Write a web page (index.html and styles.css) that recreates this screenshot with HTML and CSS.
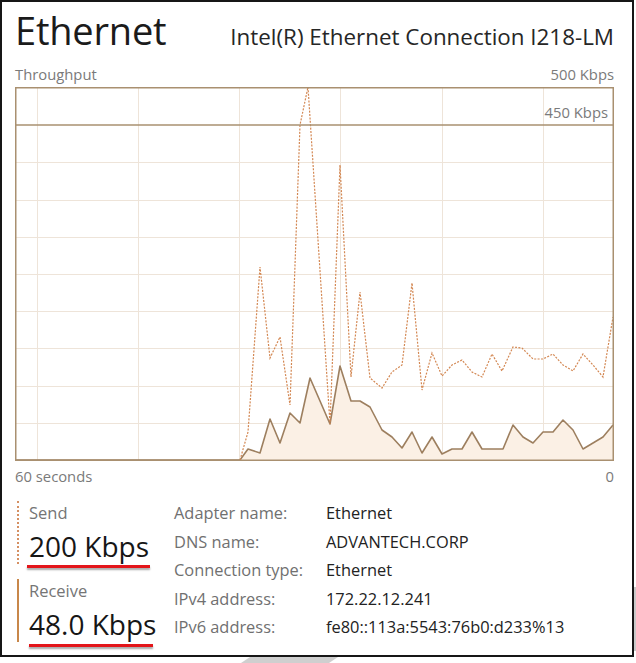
FILE: index.html
```html
<!DOCTYPE html>
<html lang="en">
<head>
<meta charset="utf-8">
<title>Ethernet</title>
<link rel="stylesheet" href="styles.css">
</head>
<body>
<div class="frame">
  <header class="header">
    <h1 class="title">Ethernet</h1>
    <div class="adapter">Intel(R) Ethernet Connection I218-LM</div>
  </header>
  <div class="axis axis-top"><span>Throughput</span><span>500 Kbps</span></div>
  <div class="graph">
    <svg class="chart" width="599" height="374" viewBox="0 0 599 374">
      <g class="grid">
        <line x1="0" y1="75.5" x2="599" y2="75.5"/>
        <line x1="0" y1="113.5" x2="599" y2="113.5"/>
        <line x1="0" y1="150.5" x2="599" y2="150.5"/>
        <line x1="0" y1="187.5" x2="599" y2="187.5"/>
        <line x1="0" y1="224.5" x2="599" y2="224.5"/>
        <line x1="0" y1="261.5" x2="599" y2="261.5"/>
        <line x1="0" y1="299.5" x2="599" y2="299.5"/>
        <line x1="0" y1="336.5" x2="599" y2="336.5"/>
        <line x1="22.5" y1="0" x2="22.5" y2="374"/>
        <line x1="123.5" y1="0" x2="123.5" y2="374"/>
        <line x1="224.5" y1="0" x2="224.5" y2="374"/>
        <line x1="325.5" y1="0" x2="325.5" y2="374"/>
        <line x1="427.5" y1="0" x2="427.5" y2="374"/>
        <line x1="528.5" y1="0" x2="528.5" y2="374"/>
      </g>
      <polygon class="recv-fill" points="225,373 233,362 245,366 255,332 265,356 275,326 285,336 295,291 315,337 325,279 336,314 345,314 355,320 367,343 377,350 387,361 397,345 407,366 417,350 427,367 437,362 447,362 457,345 467,362 488,362 498,338 508,350 518,356 528,345 538,345 548,333 558,343 568,362 578,356 588,350 598,338 598,373"/>
      <polyline class="recv-line" points="0,373 225,373 233,362 245,366 255,332 265,356 275,326 285,336 295,291 315,337 325,279 336,314 345,314 355,320 367,343 377,350 387,361 397,345 407,366 417,350 427,367 437,362 447,362 457,345 467,362 488,362 498,338 508,350 518,356 528,345 538,345 548,333 558,343 568,362 578,356 588,350 598,338"/>
      <polyline class="send-line" points="225,373 233,345 245,180 255,271 265,250 275,318 285,38 293,0 315,337 325,78 336,290 345,205 355,291 367,301 377,285 387,278 397,196 407,303 417,266 427,289 437,278 447,273 457,285 467,290 477,267 487,284 498,260 507,261 518,272 528,272 538,267 548,278 558,284 568,267 578,278 588,290 598,230"/>
      <line class="limit" x1="0" y1="38" x2="599" y2="38"/>
      <rect class="border" x="0.75" y="0.75" width="597.5" height="372.5"/>
    </svg>
    <span class="graph-label">450 Kbps</span>
  </div>
  <div class="axis axis-bottom"><span>60 seconds</span><span>0</span></div>
  <section class="stats">
    <div class="metrics">
      <div class="metric metric-send">
        <div class="metric-body">
          <div class="metric-label">Send</div>
          <div class="metric-value">200 Kbps</div>
        </div>
        <div class="underline"></div>
      </div>
      <div class="metric metric-recv">
        <div class="metric-body">
          <div class="metric-label">Receive</div>
          <div class="metric-value">48.0 Kbps</div>
        </div>
        <div class="underline"></div>
      </div>
    </div>
    <dl class="details">
      <dt>Adapter name:</dt><dd>Ethernet</dd>
      <dt>DNS name:</dt><dd>ADVANTECH.CORP</dd>
      <dt>Connection type:</dt><dd>Ethernet</dd>
      <dt>IPv4 address:</dt><dd>172.22.12.241</dd>
      <dt>IPv6 address:</dt><dd>fe80::113a:5543:76b0:d233%13</dd>
    </dl>
  </section>
</div>
</body>
</html>
```
FILE: styles.css
```css
* { box-sizing: border-box; }
html, body { margin: 0; padding: 0; background: #fff; }
body {
  font-family: "Open Sans", "Noto Sans", sans-serif;
  color: #1a1a1a;
  width: 636px;
  height: 663px;
  overflow: hidden;
}
.frame {
  position: relative;
  width: 634px;
  height: 657px;
  border: 2px solid #161616;
  padding: 5px 18px 0 13px;
}
.frame::after {
  content: "";
  position: absolute;
  left: 236px;
  top: 655px;
  width: 100px;
  height: 8px;
  background: #cfcfcf;
  clip-path: polygon(12% 0, 100% 0, 88% 100%, 0 100%);
}
.frame::before {
  content: "";
  position: absolute;
  right: -4px;
  top: 585px;
  width: 2px;
  height: 64px;
  background: #c9c9c9;
}
.header {
  display: flex;
  justify-content: space-between;
  align-items: baseline;
  height: 46px;
}
.title {
  margin: 0;
  font-weight: 400;
  font-size: 38px;
  line-height: 46px;
  color: #1b1b1b;
  letter-spacing: -0.2px;
}
.adapter {
  font-size: 22.4px;
  line-height: 46px;
  color: #262626;
  letter-spacing: 0;
}
.axis {
  display: flex;
  justify-content: space-between;
  font-size: 14.8px;
  line-height: 16px;
  color: #7a7a7a;
}
.axis-top { margin-top: 13px; }
.graph {
  position: relative;
  width: 599px;
  height: 374px;
  margin-top: 5px;
}
.chart { display: block; }
.grid line { stroke: #eee4d9; stroke-width: 1; }
.recv-fill { fill: #fbf0e5; }
.recv-line { fill: none; stroke: #9d7f5f; stroke-width: 1.6; stroke-linejoin: round; }
.send-line { fill: none; stroke: #d38752; stroke-width: 1.2; stroke-dasharray: 2 1.4; }
.limit { stroke: #a99070; stroke-width: 1.5; }
.border { fill: none; stroke: #a99070; stroke-width: 1.5; }
.graph-label {
  position: absolute;
  right: 6px;
  top: 17px;
  font-size: 14.8px;
  line-height: 16px;
  color: #7a7a7a;
}
.axis-bottom { margin-top: 7px; }
.stats {
  display: flex;
  margin-top: 15px;
}
.metrics {
  width: 159px;
  padding-top: 2px;
}
.metric-body {
  margin-left: 2px;
  padding-left: 10px;
  border-left: 2px dotted #d59063;
}
.metric-recv { margin-top: 11px; }
.metric-recv .metric-body { border-left: 2px solid #c8874a; }
.metric-label {
  font-size: 16.5px;
  line-height: 24px;
  color: #757575;
}
.metric-value {
  font-size: 28px;
  line-height: 35px;
  margin-top: 4px;
  color: #161616;
  letter-spacing: 0;
}
.underline {
  height: 3px;
  width: 123px;
  margin-top: 1px;
  margin-left: 12px;
  background: #e3151a;
  box-shadow: 0 2px 2px rgba(0, 0, 0, 0.35);
}
.metric-recv .underline { margin-left: 14px; width: 124px; margin-top: 2px; }
.details {
  margin: 0;
  display: grid;
  grid-template-columns: 152px auto;
  grid-auto-rows: 28.5px;
  font-size: 16.4px;
  line-height: 28.5px;
}
.details dt { color: #707070; }
.details dd { margin: 0; color: #222; }
```
